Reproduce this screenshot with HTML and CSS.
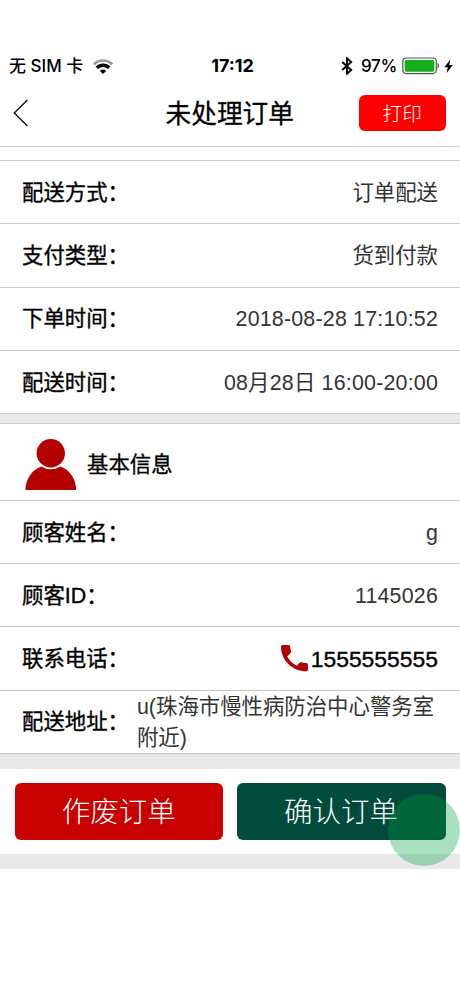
FILE: index.html
```
<!DOCTYPE html>
<html lang="zh-CN">
<head>
    <meta charset="UTF-8">
    <meta name="viewport" content="width=device-width, initial-scale=1.0">
    <title>未处理订单</title>
    <link rel="stylesheet" href="styles.css">
</head>
<body>
    <div class="status-bar">
        <div class="status-left">
            <span>无 SIM 卡</span>
            <svg class="wifi" width="20" height="15" viewBox="0 0 20 15">
                <path d="M0.8 5.3a13.2 13.2 0 0 1 18.4 0" fill="none" stroke="#999" stroke-width="2.6"/>
                <path d="M3.8 8.8a8.700 8.700 0 0 1 12.400 0" fill="none" stroke="#000" stroke-width="3.4"/>
                <path d="M6.900 11.900a4.600 4.600 0 0 1 6.200 0L10 15z" fill="#000"/>
            </svg>
        </div>
        <div class="status-time">17:12</div>
        <div class="status-right">
            <svg class="bluetooth" width="12" height="18" viewBox="0 0 12 18">
                <path d="M1.2 5l9 8L6 16.7V1.3L10.2 5l-9 8" fill="none" stroke="#000" stroke-width="1.9"/>
            </svg>
            <span>97%</span>
            <svg class="battery" width="39" height="18" viewBox="0 0 39 18">
                <rect x="0.8" y="1" width="33.5" height="15.6" rx="3.5" fill="#fff" stroke="#555" stroke-width="1.2"/>
                <rect x="2.7" y="2.9" width="29.6" height="11.8" rx="1.6" fill="#16ae20"/>
                <path d="M35.500 5.800q3 3 0 6z" fill="#555"/>
            </svg>
            <svg class="bolt" width="9" height="15" viewBox="0 0 9 15">
                <path d="M6.4 0.5L0.3 8.3h3.5L2.4 14.2 8.8 6.1H5.2z" fill="#000"/>
            </svg>
        </div>
    </div>

    <header>
        <a href="#" class="back">
            <svg width="16" height="28" viewBox="0 0 16 28">
                <path d="M14.4 1L1.3 14l13.1 13" fill="none" stroke="#111" stroke-width="1.4"/>
            </svg>
        </a>
        <h1>未处理订单</h1>
        <button class="print-button">打印</button>
    </header>

    <div class="section">
        <div class="row">
            <span class="label">配送方式：</span>
            <span class="value">订单配送</span>
        </div>
        <div class="row">
            <span class="label">支付类型：</span>
            <span class="value">货到付款</span>
        </div>
        <div class="row">
            <span class="label">下单时间：</span>
            <span class="value number">2018-08-28 17:10:52</span>
        </div>
        <div class="row">
            <span class="label">配送时间：</span>
            <span class="value number">08月28日 16:00-20:00</span>
        </div>
    </div>

    <div class="section customer">
        <div class="section-title">
            <svg width="52" height="52" viewBox="0 0 52 52">
                <circle cx="25.8" cy="14.3" r="14.2" fill="#b30000"/>
                <path d="M0.5 51C0.5 40 7 30.8 16.2 27.4Q25.8 33.2 35.4 27.4C44.8 30.8 51.2 40 51.2 51z" fill="#b30000"/>
            </svg>
            <h2>基本信息</h2>
        </div>
        <div class="row">
            <span class="label">顾客姓名：</span>
            <span class="value">g</span>
        </div>
        <div class="row">
            <span class="label">顾客ID：</span>
            <span class="value number">1145026</span>
        </div>
        <div class="row">
            <span class="label">联系电话：</span>
            <a href="#" class="value phone">
                <svg width="27" height="27" viewBox="0 0 27 27">
                    <path d="M1.5 0h6.1q1.3 0 1.5 1.4.2 2.5 1 4.8.3 1-.5 1.8L6.3 11.5q3.2 6 9.4 9.3l3.3-3.2q.8-.7 1.7-.4 2.2.8 4.7.9 1.5.1 1.5 1.5v5.2q0 1.5-1.5 1.5C11.2 26.3 0 15.4 0 1.5Q0 0 1.5 0z" fill="#b30000"/>
                </svg>
                <span>1555555555</span>
            </a>
        </div>
        <div class="row">
            <span class="label">配送地址：</span>
            <span class="value address">u(珠海市慢性病防治中心警务室附近)</span>
        </div>
    </div>

    <div class="actions">
        <button class="cancel-button">作废订单</button>
        <button class="confirm-button">确认订单<span class="touch"></span></button>
    </div>
</body>
</html>
```
FILE: styles.css
```
* {
    margin: 0;
    padding: 0;
    box-sizing: border-box;
}

body {
    width: 460px;
    height: 996px;
    padding-top: 52px;
    background: #fff;
    color: #000;
    font-family: "Liberation Sans", "Noto Sans CJK SC", sans-serif;
    overflow: hidden;
}

svg {
    display: block;
    flex-shrink: 0;
}

button {
    border: none;
    color: #fff;
    font-family: "Noto Sans CJK SC", sans-serif;
    font-weight: 300;
}

.status-bar {
    display: grid;
    grid-template-columns: 1fr auto 1fr;
    align-items: center;
    height: 28px;
    padding: 0 7px 0 9px;
    font-family: Inter, "Noto Sans CJK SC", sans-serif;
    font-size: 17px;
    font-weight: 500;
    line-height: 28px;
}

.status-left,
.status-right {
    display: flex;
    align-items: center;
}

.status-left {
    gap: 10px;
}

.status-right {
    justify-content: flex-end;
}

.status-right span {
    letter-spacing: -0.3px;
}

.status-time {
    padding-left: 3px;
    font-size: 18px;
    font-weight: 700;
}

.bluetooth {
    margin-right: 8px;
}

.battery {
    margin: 0 3px 0 5px;
}

header {
    display: grid;
    grid-template-columns: 1fr auto 1fr;
    align-items: center;
    height: 67px;
    padding: 0 14.5px 1px 13px;
    border-bottom: 1px solid #d4d4d4;
}

h1 {
    padding: 2px 0 0 1px;
    font-size: 25.7px;
    font-weight: 400;
    line-height: 36px;
    -webkit-text-stroke: 0.3px #000;
}

.print-button {
    justify-self: end;
    width: 86.5px;
    height: 36px;
    border-radius: 6px;
    background: #f00;
    font-size: 19.7px;
}

.section {
    margin-top: 13px;
    border-top: 1px solid #c8c8c8;
    font-size: 21.4px;
    line-height: 31.5px;
}

.row {
    display: flex;
    align-items: center;
    justify-content: space-between;
    height: 63.3px;
    padding: 3px 22px 0;
    border-bottom: 1px solid #c8c8c8;
}

.label {
    flex-shrink: 0;
    -webkit-text-stroke: 0.35px #000;
}

.value {
    color: #333;
}

.number {
    letter-spacing: 0.2px;
}

.phone {
    display: flex;
    align-items: center;
    gap: 3px;
    color: #000;
    font-size: 22.9px;
    text-decoration: none;
    -webkit-text-stroke: 0.35px #000;
}

.phone svg {
    margin-top: -3px;
}

.address {
    flex: 1;
    margin-left: 8px;
    margin-right: -10px;
}

.customer {
    margin-top: 0;
    border-top: 9px solid #e9e9e9;
}

.section-title {
    display: flex;
    align-items: center;
    gap: 10px;
    height: 77.5px;
    padding: 6px 25px 0;
    border-top: 1px solid #c8c8c8;
    border-bottom: 1px solid #c8c8c8;
}

h2 {
    padding-top: 2px;
    font-size: 21.4px;
    font-weight: 400;
    -webkit-text-stroke: 0.35px #000;
}

.actions {
    display: flex;
    gap: 13.5px;
    padding: 14px 14.5px;
    border-top: 15px solid #e9e9e9;
    border-bottom: 15px solid #e9e9e9;
}

.cancel-button,
.confirm-button {
    position: relative;
    flex: 1;
    height: 57.5px;
    padding-bottom: 4px;
    border-radius: 6px;
    font-size: 28.5px;
}

.cancel-button {
    background: #c80000;
}

.confirm-button {
    background: #004b3c;
}

/* touch point over the confirm button */
.touch {
    position: absolute;
    right: -14.5px;
    bottom: -25.5px;
    width: 72px;
    height: 72px;
    border-radius: 50%;
    background: rgba(0, 160, 60, 0.33);
}
```
